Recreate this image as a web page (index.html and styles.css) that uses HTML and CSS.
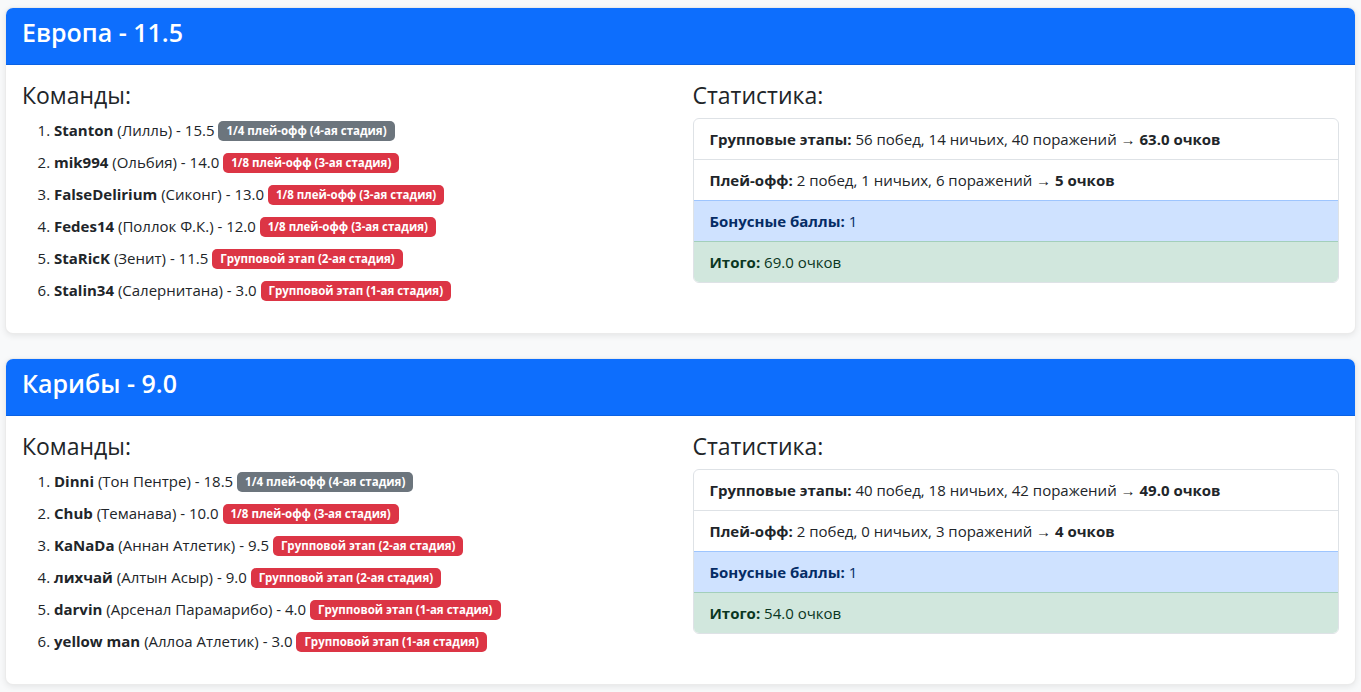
FILE: index.html
```html
<!DOCTYPE html>
<html>
    <head>
        <meta charset="utf-8">
        <link rel="stylesheet" href="styles.css">
    </head>
    <body>
        <div class="page">
            <div class="card">
                <div class="card-header">
                    <h3>Европа - 11.5</h3>
                </div>
                <div class="card-body">
                    <div class="col">
                        <h4>Команды:</h4>
                        <ol class="teams">
                            <li><b>Stanton</b> (Лилль) - 15.5 <span class="badge gray">1/4 плей-офф (4-ая стадия)</span></li>
                            <li><b>mik994</b> (Ольбия) - 14.0 <span class="badge red">1/8 плей-офф (3-ая стадия)</span></li>
                            <li><b>FalseDelirium</b> (Сиконг) - 13.0 <span class="badge red">1/8 плей-офф (3-ая стадия)</span></li>
                            <li><b>Fedes14</b> (Поллок Ф.К.) - 12.0 <span class="badge red">1/8 плей-офф (3-ая стадия)</span></li>
                            <li><b>StaRicK</b> (Зенит) - 11.5 <span class="badge red">Групповой этап (2-ая стадия)</span></li>
                            <li><b>Stalin34</b> (Салернитана) - 3.0 <span class="badge red">Групповой этап (1-ая стадия)</span></li>
                        </ol>
                    </div>
                    <div class="col">
                        <h4>Статистика:</h4>
                        <ul class="stats">
                            <li><b>Групповые этапы:</b> 56 побед, 14 ничьих, 40 поражений → <b>63.0 очков</b></li>
                            <li><b>Плей-офф:</b> 2 побед, 1 ничьих, 6 поражений → <b>5 очков</b></li>
                            <li class="bonus"><b>Бонусные баллы:</b> 1</li>
                            <li class="total"><b>Итого:</b> 69.0 очков</li>
                        </ul>
                    </div>
                </div>
            </div>

            <div class="card">
                <div class="card-header">
                    <h3>Карибы - 9.0</h3>
                </div>
                <div class="card-body">
                    <div class="col">
                        <h4>Команды:</h4>
                        <ol class="teams">
                            <li><b>Dinni</b> (Тон Пентре) - 18.5 <span class="badge gray">1/4 плей-офф (4-ая стадия)</span></li>
                            <li><b>Chub</b> (Теманава) - 10.0 <span class="badge red">1/8 плей-офф (3-ая стадия)</span></li>
                            <li><b>KaNaDa</b> (Аннан Атлетик) - 9.5 <span class="badge red">Групповой этап (2-ая стадия)</span></li>
                            <li><b>лихчай</b> (Алтын Асыр) - 9.0 <span class="badge red">Групповой этап (2-ая стадия)</span></li>
                            <li><b>darvin</b> (Арсенал Парамарибо) - 4.0 <span class="badge red">Групповой этап (1-ая стадия)</span></li>
                            <li><b>yellow man</b> (Аллоа Атлетик) - 3.0 <span class="badge red">Групповой этап (1-ая стадия)</span></li>
                        </ol>
                    </div>
                    <div class="col">
                        <h4>Статистика:</h4>
                        <ul class="stats">
                            <li><b>Групповые этапы:</b> 40 побед, 18 ничьих, 42 поражений → <b>49.0 очков</b></li>
                            <li><b>Плей-офф:</b> 2 побед, 0 ничьих, 3 поражений → <b>4 очков</b></li>
                            <li class="bonus"><b>Бонусные баллы:</b> 1</li>
                            <li class="total"><b>Итого:</b> 54.0 очков</li>
                        </ul>
                    </div>
                </div>
            </div>
        </div>
    </body>
</html>
```

FILE: styles.css
```css
html{
    overflow: hidden;
}
body{
    margin: 0;
    background: #f8f9fa;
    color: #212529;
    font-family: "Open Sans", "Noto Sans", sans-serif;
    font-size: 15px;
    line-height: 24px;
}
.page{
    padding: 7px 5px;
}
.card{
    background: white;
    border: 1px solid rgba(0,0,0,.08);
    border-radius: 8px;
    box-shadow: 0 2px 6px rgba(0,0,0,.08);
    margin-bottom: 24px;
    overflow: hidden;
}
.card-header{
    background: #0d6efd;
    color: white;
    padding: 8px 16px;
    border-bottom: 1px solid rgba(0,0,0,.1);
}
h3{
    margin: 0 0 7px 0;
    font-size: 25px;
    font-weight: 600;
    line-height: 33px;
}
.card-body{
    display: grid;
    grid-template-columns: 1fr 1fr;
    column-gap: 24px;
    padding: 16px 16px 15px 16px;
}
h4{
    margin: 0 0 8px 0;
    font-size: 23px;
    font-weight: 500;
    line-height: 29px;
}
.teams{
    margin: 0 0 16px 0;
    padding-left: 32px;
}
.teams li{
    margin-bottom: 8px;
}
.badge{
    display: inline-block;
    color: white;
    font-size: 11.5px;
    font-weight: 700;
    line-height: 12px;
    padding: 4px 8px;
    border-radius: 5px;
    vertical-align: 1px;
}
.gray{
    background: #6c757d;
}
.red{
    background: #dc3545;
}
.stats{
    list-style: none;
    margin: 0;
    padding: 0;
    border: 1px solid #dee2e6;
    border-radius: 6px;
    overflow: hidden;
}
.stats li{
    padding: 8px 16px;
    border-top: 1px solid #dee2e6;
}
.stats li:first-child{
    border-top: 0;
}
.stats .bonus{
    background: #cfe2ff;
    color: #052c65;
    border-top-color: #9ec5fe;
}
.stats .total{
    background: #d1e7dd;
    color: #0a3622;
    border-top-color: #a3cfbb;
}
```
